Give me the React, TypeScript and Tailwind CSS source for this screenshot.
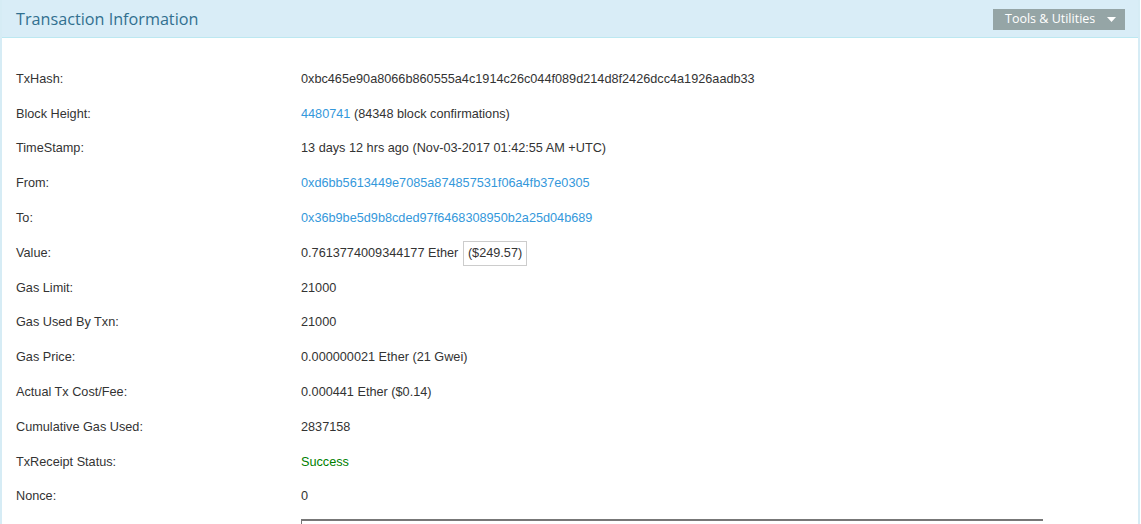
type Row = { label: string; value: React.ReactNode };

const link = 'text-[#3498db]';

const rows: Row[] = [
  { label: 'TxHash:', value: '0xbc465e90a8066b860555a4c1914c26c044f089d214d8f2426dcc4a1926aadb33' },
  {
    label: 'Block Height:',
    value: (
      <>
        <span className={link}>4480741</span> (84348 block confirmations)
      </>
    ),
  },
  { label: 'TimeStamp:', value: '13 days 12 hrs ago (Nov-03-2017 01:42:55 AM +UTC)' },
  { label: 'From:', value: <span className={link}>0xd6bb5613449e7085a874857531f06a4fb37e0305</span> },
  { label: 'To:', value: <span className={link}>0x36b9be5d9b8cded97f6468308950b2a25d04b689</span> },
  {
    label: 'Value:',
    value: (
      <>
        0.7613774009344177 Ether{' '}
        <span className="ml-[1px] inline-block border border-[#ccc] px-[4px] py-[2px]">($249.57)</span>
      </>
    ),
  },
  { label: 'Gas Limit:', value: '21000' },
  { label: 'Gas Used By Txn:', value: '21000' },
  { label: 'Gas Price:', value: '0.000000021 Ether (21 Gwei)' },
  { label: 'Actual Tx Cost/Fee:', value: '0.000441 Ether ($0.14)' },
  { label: 'Cumulative Gas Used:', value: '2837158' },
  { label: 'TxReceipt Status:', value: <span className="text-[#008000]">Success</span> },
  { label: 'Nonce:', value: '0' },
];

export default function App() {
  return (
    <div className="h-[524px] w-[1141px] overflow-hidden bg-white">
      <div className="mr-[1px] h-[540px] border-x-2 border-[#d6ecf5] bg-white">
        <div className="flex h-[38px] items-start justify-between border-b border-[#bce8f1] bg-[#d9edf7] pl-[14px] pr-[13px]">
          <h2 className="mt-[7px] font-['Open_Sans',sans-serif] text-[16.2px] leading-[24px] text-[#31708f]">
            Transaction Information
          </h2>
          <button className="mt-[9px] flex h-[21px] w-[132px] items-center justify-between bg-[#95a5a6] pl-[12px] pr-[9px] font-['Open_Sans',sans-serif] text-[12.5px] text-white">
            Tools &amp; Utilities
            <svg width="9" height="6" viewBox="0 0 9 6" className="mt-[1px]">
              <path d="M0 0h9L4.5 5z" fill="white" />
            </svg>
          </button>
        </div>

        <div className="pt-[24px] font-['Liberation_Sans',Arial,sans-serif] text-[12.7px] text-[#333]">
          {rows.map((r) => (
            <div key={r.label} className="flex h-[34.8px] items-center pl-[14px]">
              <div className="w-[285px] shrink-0">{r.label}</div>
              <div>{r.value}</div>
            </div>
          ))}
          <div className="ml-[299px] mt-[5px] h-[60px] w-[742px] border-l border-t-2 border-[#777]" />
        </div>
      </div>
    </div>
  );
}
